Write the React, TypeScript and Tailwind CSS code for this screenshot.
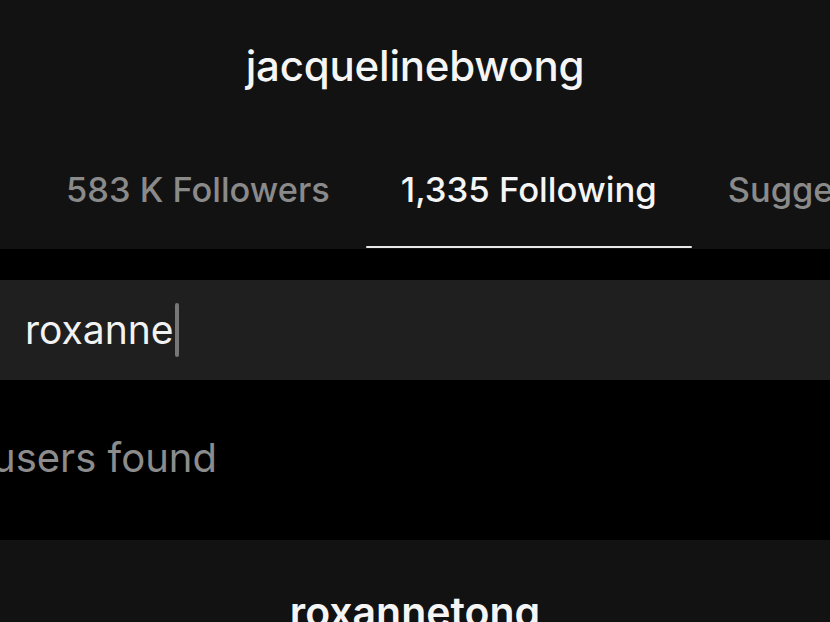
import React from "react";

export default function App() {
  return (
    <div
      className="w-[830px] h-[622px] overflow-hidden bg-black flex flex-col"
      style={{ fontFamily: "Inter, 'Liberation Sans', sans-serif" }}
    >
      <div className="h-[249px] bg-[#121212] flex flex-col shrink-0">
        <div className="h-[140px] flex items-center justify-center pb-[9px]">
          <div className="text-[42px] font-medium text-[#f5f5f5] tracking-[-0.2px]">jacquelinebwong</div>
        </div>
        <div className="flex-1 flex pl-[30px] whitespace-nowrap">
          <div className="px-[36px] shrink-0 flex items-center justify-center text-[34.4px] font-medium text-[#8a8a8a] pb-[10px]">
            583 K Followers
          </div>
          <div className="px-[35px] shrink-0 flex flex-col">
            <div className="flex-1 flex items-center justify-center text-[34.7px] font-medium text-[#f5f5f5] pb-[8px]">
              1,335 Following
            </div>
            <div className="h-[2px] bg-[#e8e8e8] rounded-full mb-[1px] -mx-[35px]" />
          </div>
          <div className="px-[36px] shrink-0 flex items-center justify-center text-[34.4px] font-medium text-[#8a8a8a] pb-[10px]">
            Suggested
          </div>
        </div>
      </div>
      <div className="h-[31px] shrink-0 bg-black" />
      <div className="h-[100px] shrink-0 bg-[#1f1f1f] flex items-center pl-[25px]">
        <span className="text-[39px] text-[#f2f2f2]">roxanne</span>
        <span className="w-[4px] h-[54px] bg-[#777] rounded-full ml-[1px]" />
      </div>
      <div className="h-[160px] shrink-0 bg-black flex items-center -ml-[8px] pb-[4px]">
        <span className="text-[40px] text-[#8c8c8c]">users found</span>
      </div>
      <div className="flex-1 bg-[#121212] flex justify-center pt-[42px]">
        <span className="text-[41px] font-semibold text-[#f5f5f5]">roxannetong</span>
      </div>
    </div>
  );
}
